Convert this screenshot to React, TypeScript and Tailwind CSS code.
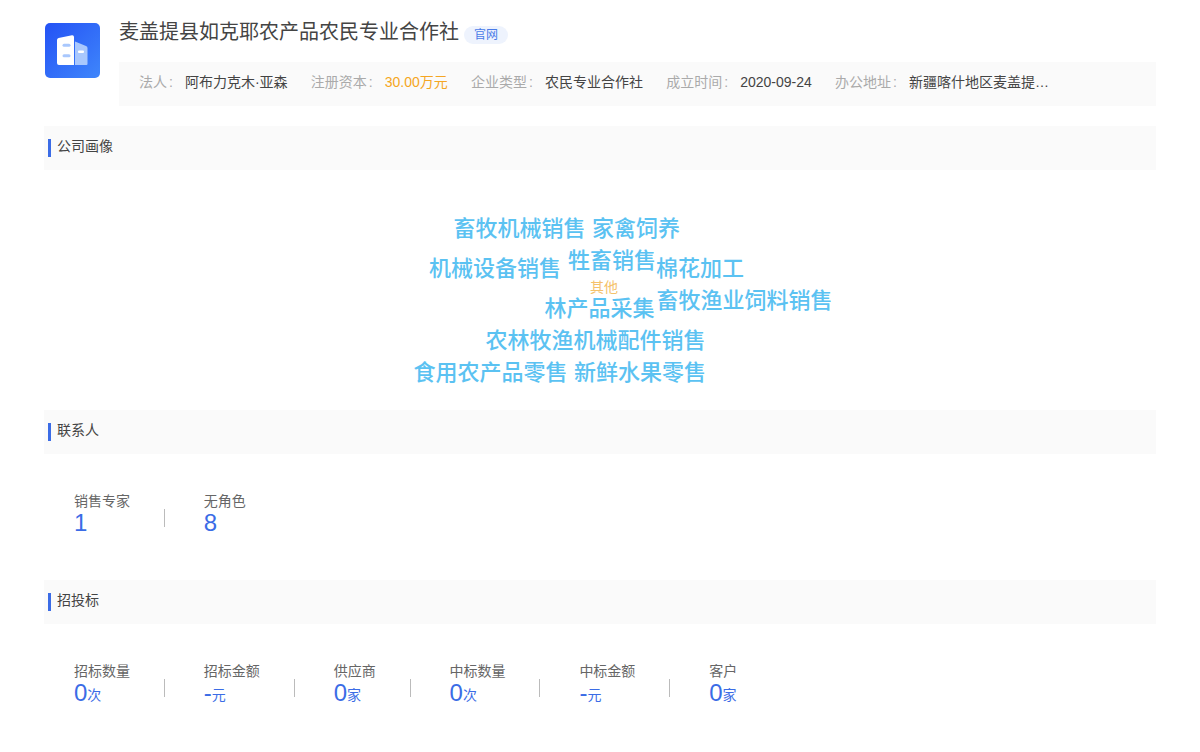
const FONT = "font-['Liberation_Sans','Noto_Sans_CJK_SC',sans-serif]";

// -------------------------- Data ----------------------
const infoItems = [
  { label: "法人", value: "阿布力克木·亚森", valueClass: "text-[#444]" },
  { label: "注册资本", value: "30.00万元", valueClass: "text-[#f5a623]" },
  { label: "企业类型", value: "农民专业合作社", valueClass: "text-[#444]" },
  { label: "成立时间", value: "2020-09-24", valueClass: "text-[#444]" },
];

const contacts = [
  { label: "销售专家", value: "1" },
  { label: "无角色", value: "8" },
];

const bids = [
  { label: "招标数量", value: "0", unit: "次" },
  { label: "招标金额", value: "-", unit: "元" },
  { label: "供应商", value: "0", unit: "家" },
  { label: "中标数量", value: "0", unit: "次" },
  { label: "中标金额", value: "-", unit: "元" },
  { label: "客户", value: "0", unit: "家" },
];

const words = [
  { text: "畜牧机械销售", pos: "left-[409.5px] top-[48px]" },
  { text: "家禽饲养", pos: "left-[548px] top-[48px]" },
  { text: "机械设备销售", pos: "left-[385px] top-[88px]" },
  { text: "牲畜销售", pos: "left-[524px] top-[80px]" },
  { text: "棉花加工", pos: "left-[612px] top-[88px]" },
  { text: "林产品采集", pos: "left-[500.5px] top-[128px]" },
  { text: "畜牧渔业饲料销售", pos: "left-[612.5px] top-[120px]" },
  { text: "农林牧渔机械配件销售", pos: "left-[441.5px] top-[160px]" },
  { text: "食用农产品零售", pos: "left-[369.5px] top-[192px]" },
  { text: "新鲜水果零售", pos: "left-[530px] top-[192px]" },
];

// -------------------------- Parts ----------------------
function Logo() {
  return (
    <svg width="55" height="55" viewBox="0 0 55 55" className="shrink-0">
      <defs>
        <linearGradient id="logoBg" x1="0" y1="0" x2="1" y2="1">
          <stop offset="0" stopColor="#2452f5" />
          <stop offset="1" stopColor="#3f86fb" />
        </linearGradient>
      </defs>
      <rect width="55" height="55" rx="5" fill="url(#logoBg)" />
      <path
        d="M30 18.5 L41 23 Q42.5 23.7 42.5 25 V41 Q42.5 42 41.5 42 H30 Z"
        fill="#a9c8fd"
      />
      <path
        d="M12 17 Q12 15.3 13.6 15 L27 12.2 Q29 12 29 14 V42 H14 Q12 42 12 40 Z"
        fill="#ffffff"
      />
      <rect x="17.5" y="20.8" width="8" height="3" rx="1.5" fill="#a9c8fd" />
      <rect x="17.5" y="31.2" width="8" height="3" rx="1.5" fill="#a9c8fd" />
      <rect x="33" y="27.5" width="6" height="2.5" rx="1" fill="#ffffff" />
    </svg>
  );
}

function SectionHeader({ title }: { title: string }) {
  return (
    <div className="flex h-[44px] bg-[#fafafa] pl-1">
      <span className="mt-[13px] h-[18px] w-[3px] bg-[#3b6ce6]" />
      <span className="ml-[6px] mt-[9px] text-[14px] leading-[22px] text-[#444]">
        {title}
      </span>
    </div>
  );
}

function Stat({
  label,
  value,
  unit,
  last,
}: {
  label: string;
  value: string;
  unit?: string;
  last: boolean;
}) {
  return (
    <div className="flex items-start">
      <div>
        <div className="text-[14px] leading-[20px] text-[#666]">{label}</div>
        <div className="flex h-[24px] items-end text-[#3b6ce6]">
          <span className="text-[24px] leading-[24px]">{value}</span>
          <span className="text-[14px] leading-[20px]">{unit}</span>
        </div>
      </div>
      {!last && (
        <span className="ml-[33.85px] mr-[39px] mt-[18px] h-[18px] w-px bg-[#bbb]" />
      )}
    </div>
  );
}

export default function App() {
  return (
    <div className={`${FONT} h-[752px] overflow-hidden bg-white px-11`}>
      {/* header */}
      <div className="flex pt-[23px]">
        <div className="ml-px">
          <Logo />
        </div>
        <div className="ml-[19px] min-w-0 flex-1 -mt-[23px]">
          <div className="flex h-[62px] items-start pt-[18px]">
            <h1 className="text-[20px] font-normal leading-[28px] text-[#444]">
              麦盖提县如克耶农产品农民专业合作社
            </h1>
            <span className="ml-[5px] mt-[8px] flex h-[18px] w-[44px] items-center justify-center rounded-full bg-[#eef3fd] text-[12px] text-[#4a7be8]">
              官网
            </span>
          </div>
          <div className="flex h-[44px] items-center bg-[#fafafa] pb-1 pl-5 text-[14px]">
            {infoItems.map((item) => (
              <div className="mr-[23.3px] flex" key={item.label}>
                <span className="mr-3 text-[#aaa]">
                  {item.label}
                  <span className="ml-[2px]">:</span>
                </span>
                <span className={item.valueClass}>{item.value}</span>
              </div>
            ))}
            <div className="flex">
              <span className="mr-3 text-[#aaa]">
                办公地址
                <span className="ml-[2px]">:</span>
              </span>
              <span className="whitespace-nowrap text-[#444]">
                新疆喀什地区麦盖提…
              </span>
            </div>
          </div>
        </div>
      </div>

      {/* 公司画像 */}
      <div className="mt-5">
        <SectionHeader title="公司画像" />
        <div className="relative h-[240px]">
          {words.map((word) => (
            <span
              className={`absolute whitespace-nowrap text-[22px] font-medium leading-[22px] text-[#5bc2f2] ${word.pos}`}
              key={word.text}
            >
              {word.text}
            </span>
          ))}
          <span className="absolute left-[546px] top-[110px] text-[14px] leading-[14px] text-[#f5c26b]">
            其他
          </span>
        </div>
      </div>

      {/* 联系人 */}
      <SectionHeader title="联系人" />
      <div className="flex h-[126px] pl-[30px] pt-[37px]">
        {contacts.map((item, i) => (
          <Stat
            key={item.label}
            label={item.label}
            value={item.value}
            last={i === contacts.length - 1}
          />
        ))}
      </div>

      {/* 招投标 */}
      <SectionHeader title="招投标" />
      <div className="flex pl-[30px] pt-[37px]">
        {bids.map((item, i) => (
          <Stat
            key={item.label}
            label={item.label}
            value={item.value}
            unit={item.unit}
            last={i === bids.length - 1}
          />
        ))}
      </div>
    </div>
  );
}
